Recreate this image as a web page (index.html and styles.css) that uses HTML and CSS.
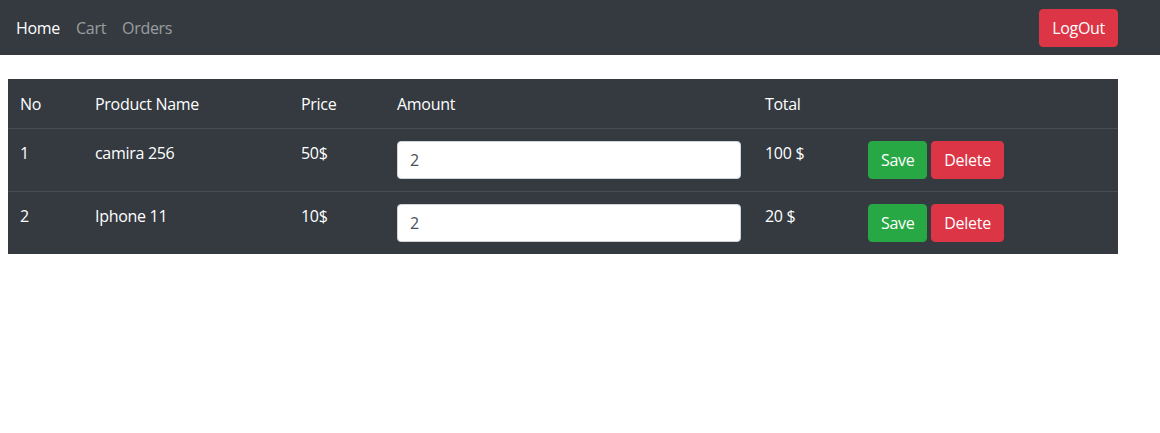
FILE: index.html
```html
<!DOCTYPE html>
<html lang="en">
<head>
<meta charset="utf-8">
<title>Cart</title>
<link rel="stylesheet" href="styles.css">
</head>
<body>
<nav class="navbar">
  <ul class="nav-links">
    <li><a class="nav-link active" href="#">Home</a></li>
    <li><a class="nav-link" href="#">Cart</a></li>
    <li><a class="nav-link" href="#">Orders</a></li>
  </ul>
  <button class="btn btn-danger">LogOut</button>
</nav>
<main class="content">
  <table class="cart-table">
    <colgroup>
      <col class="c-no"><col class="c-name"><col class="c-price"><col class="c-amount"><col class="c-total"><col class="c-actions">
    </colgroup>
    <thead>
      <tr><th>No</th><th>Product Name</th><th>Price</th><th>Amount</th><th>Total</th><th></th></tr>
    </thead>
    <tbody>
      <tr>
        <td>1</td><td>camira 256</td><td>50$</td>
        <td><input class="form-control" type="text" value="2"></td>
        <td>100 $</td>
        <td><button class="btn btn-success">Save</button> <button class="btn btn-danger">Delete</button></td>
      </tr>
      <tr>
        <td>2</td><td>Iphone 11</td><td>10$</td>
        <td><input class="form-control" type="text" value="2"></td>
        <td>20 $</td>
        <td><button class="btn btn-success">Save</button> <button class="btn btn-danger">Delete</button></td>
      </tr>
    </tbody>
  </table>
</main>
</body>
</html>
```
FILE: styles.css
```css
* { box-sizing: border-box; }
html, body { margin: 0; padding: 0; }
body {
  font-family: "Open Sans", "Noto Sans", "Liberation Sans", sans-serif;
  font-size: 16px;
  line-height: 24px;
  letter-spacing: -0.3px;
  color: #212529;
  background: #fff;
}
.navbar {
  display: flex;
  align-items: center;
  justify-content: space-between;
  height: 55px;
  padding: 0 42px 0 8px;
  background: #343a40;
}
.nav-links {
  display: flex;
  list-style: none;
  margin: 0;
  padding: 0;
}
.nav-link {
  display: block;
  padding: 8px;
  color: rgba(255, 255, 255, 0.5);
  text-decoration: none;
}
.nav-link.active { color: #fff; }
.btn {
  display: inline-block;
  height: 38px;
  padding: 6px 12px;
  font-family: inherit;
  font-size: 16px;
  line-height: 24px;
  letter-spacing: inherit;
  color: #fff;
  border: 1px solid transparent;
  border-radius: 4px;
  cursor: pointer;
  vertical-align: middle;
}
.btn-danger { background: #dc3545; border-color: #dc3545; }
.btn-success { background: #28a745; border-color: #28a745; }
.content { padding: 24px 0 0 8px; }
.cart-table {
  width: 1110px;
  table-layout: fixed;
  border-collapse: collapse;
  background: #343a40;
  color: #fff;
}
.c-no { width: 75px; }
.c-name { width: 206px; }
.c-price { width: 96px; }
.c-amount { width: 368px; }
.c-total { width: 103px; }
.c-actions { width: 262px; }
.cart-table th, .cart-table td {
  padding: 12px;
  text-align: left;
  vertical-align: top;
  font-weight: 400;
}
.cart-table thead th {
  border-top: 1px solid #343a40;
  border-bottom: 1px solid #454d55;
}
.cart-table tbody tr + tr td { border-top: 1px solid #454d55; }
.form-control {
  display: block;
  width: 344px;
  height: 38px;
  padding: 6px 12px;
  font-family: inherit;
  font-size: 16px;
  line-height: 24px;
  color: #495057;
  background: #fff;
  border: 1px solid #ced4da;
  border-radius: 4px;
}
```
